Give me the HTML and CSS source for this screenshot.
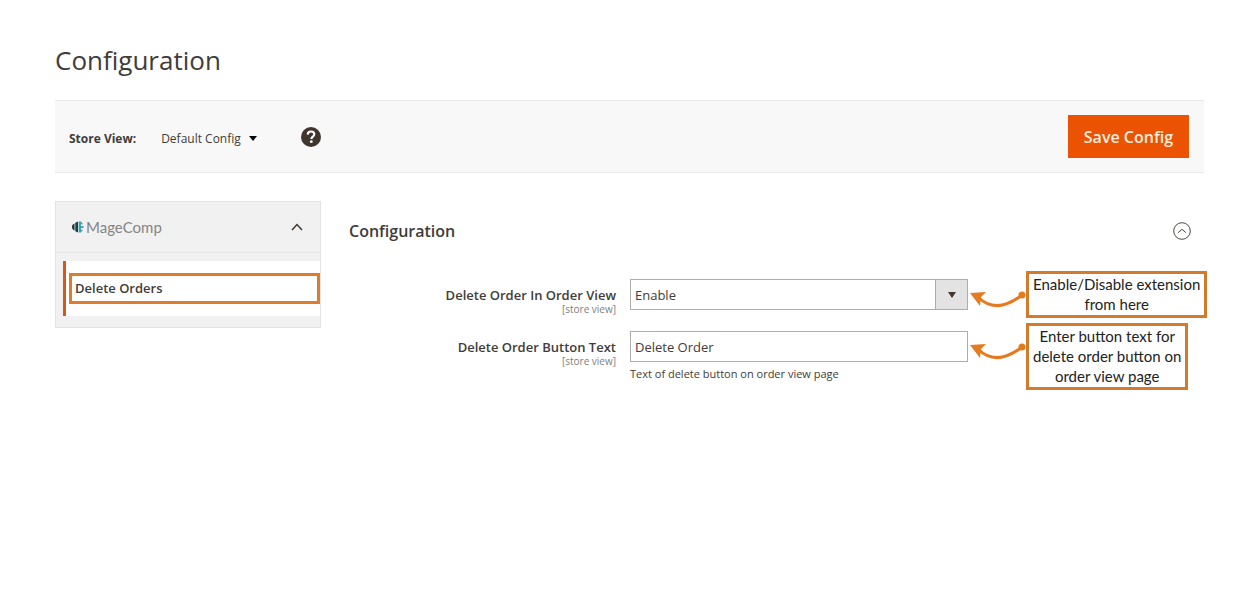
FILE: index.html
```html
<!DOCTYPE html>
<html lang="en">
<head>
  <meta charset="UTF-8">
  <meta name="viewport" content="width=device-width, initial-scale=1.0">
  <title>Configuration</title>
  <link rel="stylesheet" href="styles.css">
</head>
<body>
  <h1>Configuration</h1>

  <!-- Toolbar -->
  <div class="toolbar">
    <div class="store">
      <span class="store-label">Store View:</span>
      <button type="button" class="store-switch">Default Config
        <svg width="8" height="5" viewBox="0 0 8 5"><path d="M0 0h8L4 5z" fill="#000"/></svg>
      </button>
    </div>
    <a href="#" class="help" aria-label="Help">
      <svg width="20" height="20" viewBox="0 0 20 20">
        <circle cx="10" cy="10" r="10" fill="#41362f"/>
        <path d="M6.7 7.6C6.8 5.5 8.1 4.5 10 4.5s3.3 1.1 3.3 2.8c0 2.2-2.9 2.4-2.9 4.7" fill="none" stroke="#fff" stroke-width="2.2"/>
        <circle cx="10.3" cy="14.7" r="1.4" fill="#fff"/>
      </svg>
    </a>
    <button type="button" class="save">Save Config</button>
  </div>

  <div class="columns">
    <!-- Side navigation -->
    <nav class="sidebar">
      <button type="button" class="nav-title">
        <svg class="logo" width="12" height="12" viewBox="0 0 12 12">
          <path d="M2.500 2.500v7C1 9 0 8 0 6s1-3 2.500-3.500z" fill="#17343b"/>
          <path d="M3.300 1.800L6 .5v11l-2.700-1.300z" fill="#17404b"/>
          <path d="M6.700 .5H9l2 2.800H9v1.700h2.500v2H9v1.700h2L9 11.500H6.700z" fill="#3fa3b1"/>
        </svg>
        <span class="brand">MageComp</span>
        <svg width="12" height="8" viewBox="0 0 12 8"><path d="M1 7l5-5.500L11 7" fill="none" stroke="#41362f" stroke-width="1.500"/></svg>
      </button>
      <div class="nav-item">
        <a href="#">Delete Orders</a>
      </div>
    </nav>

    <!-- Settings -->
    <main class="content">
      <div class="section-head">
        <h2>Configuration</h2>
        <button type="button" class="collapse" aria-label="Collapse section">
          <svg width="18" height="18" viewBox="0 0 18 18" fill="none" stroke="#514943">
            <circle cx="9" cy="9" r="8.300"/>
            <path d="M5 10.700l4-3.400 4 3.400"/>
          </svg>
        </button>
      </div>

      <form class="fields">
        <div class="row">
          <label for="enable">Delete Order In Order View <small>[store view]</small></label>
          <div class="control">
            <select id="enable">
              <option>Enable</option>
              <option>Disable</option>
            </select>
            <span class="select-arrow"><svg width="8" height="6" viewBox="0 0 8 6"><path d="M0 0h8L4 6z" fill="#41362f"/></svg></span>
            <div class="note">
              <svg width="56" height="24" viewBox="0 0 56 24">
                <path d="M8 7c12 12 26 12 44-2" fill="none" stroke="#e57a1f" stroke-width="3"/>
                <path d="M0 3l16-1-5 5-1 9z" fill="#e57a1f"/>
                <circle cx="52" cy="5" r="3.500" fill="#e57a1f"/>
              </svg>
              <p>Enable/Disable extension<br>from here</p>
            </div>
          </div>
        </div>

        <div class="row">
          <label for="text">Delete Order Button Text <small>[store view]</small></label>
          <div class="control">
            <input type="text" id="text" value="Delete Order">
            <div class="note">
              <svg width="56" height="24" viewBox="0 0 56 24">
                <path d="M8 7c12 12 26 12 44-2" fill="none" stroke="#e57a1f" stroke-width="3"/>
                <path d="M0 3l16-1-5 5-1 9z" fill="#e57a1f"/>
                <circle cx="52" cy="5" r="3.500" fill="#e57a1f"/>
              </svg>
              <p>Enter button text for<br>delete order button on<br>order view page</p>
            </div>
            <div class="hint">Text of delete button on order view page</div>
          </div>
        </div>
      </form>
    </main>
  </div>
</body>
</html>
```

FILE: styles.css
```css
* { box-sizing: border-box; margin: 0; padding: 0; }

body {
  padding: 40px 46px 40px 55px;
  background: #fff;
  color: #403c39;
  font-family: "Open Sans", sans-serif;
  font-size: 13px;
}

button, input, select { font: inherit; color: inherit; }
button { border: 0; background: none; cursor: pointer; }
svg { display: block; flex: none; }
a { color: inherit; text-decoration: none; }

h1 {
  margin-bottom: 20px;
  font-size: 26px;
  font-weight: 400;
  line-height: 40px;
}

/* Toolbar */
.toolbar {
  display: flex;
  align-items: center;
  padding: 14px 15px 14px 14px;
  margin-bottom: 28px;
  background: #f8f8f8;
  border-top: 1px solid #e9e9ec;
  border-bottom: 1px solid #e9e9ec;
}

.store {
  display: flex;
  align-items: baseline;
  gap: 25px;
  padding-top: 4px;
  font-size: 12px;
}

.store-label { font-weight: 700; }

.store-switch {
  display: flex;
  align-items: center;
  gap: 8px;
}

.help { margin-left: 44px; }

.save {
  height: 43px;
  padding: 0 16px;
  margin-left: auto;
  background: #eb5202;
  color: #ffeedd;
  font-size: 16px;
  font-weight: 600;
  line-height: 20px;
}

.columns {
  display: flex;
  align-items: flex-start;
  gap: 28px;
}

/* Side navigation */
.sidebar {
  flex: none;
  width: 266px;
  padding-bottom: 11px;
  background: #f1f1f2;
  border: 1px solid #e3e3e3;
}

.nav-title {
  display: flex;
  align-items: center;
  width: 100%;
  height: 51px;
  padding: 0 17px 0 16px;
  margin-bottom: 8px;
  border-bottom: 1px solid #e6e6e6;
}

.brand {
  margin: 0 auto 0 2px;
  color: #858585;
  font-family: Lato, sans-serif;
  font-size: 15px;
}

.nav-item {
  padding: 12px 0 12px 3px;
  margin-left: 7px;
  background: #fff;
  border-left: 3px solid #cf5a1b;
}

.nav-item a {
  display: block;
  padding: 0 3px;
  border: 3px solid #dd7c2b;
  font-weight: 600;
  line-height: 25px;
}

/* Settings */
.content { flex: 1; min-width: 0; }

.section-head {
  display: flex;
  align-items: center;
  justify-content: space-between;
  padding: 18px 13px 0 0;
  margin-bottom: 36px;
}

.section-head h2 {
  font-size: 16px;
  font-weight: 600;
  line-height: 24px;
}

.row {
  display: grid;
  grid-template-columns: 267fr 338fr 222fr;
  column-gap: 14px;
  margin-bottom: 16px;
}

.row label {
  padding-top: 7px;
  font-weight: 600;
  line-height: 18px;
  text-align: right;
}

.row small {
  display: block;
  color: #808080;
  font-size: 10px;
  font-weight: 400;
  line-height: 11px;
}

.control { position: relative; }

.control input, .control select {
  display: block;
  width: 100%;
  height: 31px;
  padding: 0 4px;
  background: #fff;
  border: 1px solid #adadad;
  border-radius: 0;
  appearance: none;
}

.select-arrow {
  position: absolute;
  top: 0;
  right: 0;
  display: grid;
  place-items: center;
  width: 33px;
  height: 31px;
  background: #e3e3e3;
  border: 1px solid #adadad;
  pointer-events: none;
}

.hint {
  margin-top: 4px;
  font-size: 11px;
  line-height: 16px;
}

/* Callouts beside the fields */
.note {
  position: absolute;
  top: -8px;
  left: 100%;
  display: flex;
  align-items: flex-start;
  padding-left: 2px;
}

.note svg { margin-top: 19px; }

.note p {
  padding: 0 4px 1px;
  background: #fff;
  border: 3px solid #d47a2c;
  color: #222;
  font-family: Lato, sans-serif;
  font-size: 15px;
  line-height: 20px;
  text-align: center;
  white-space: nowrap;
}
```
